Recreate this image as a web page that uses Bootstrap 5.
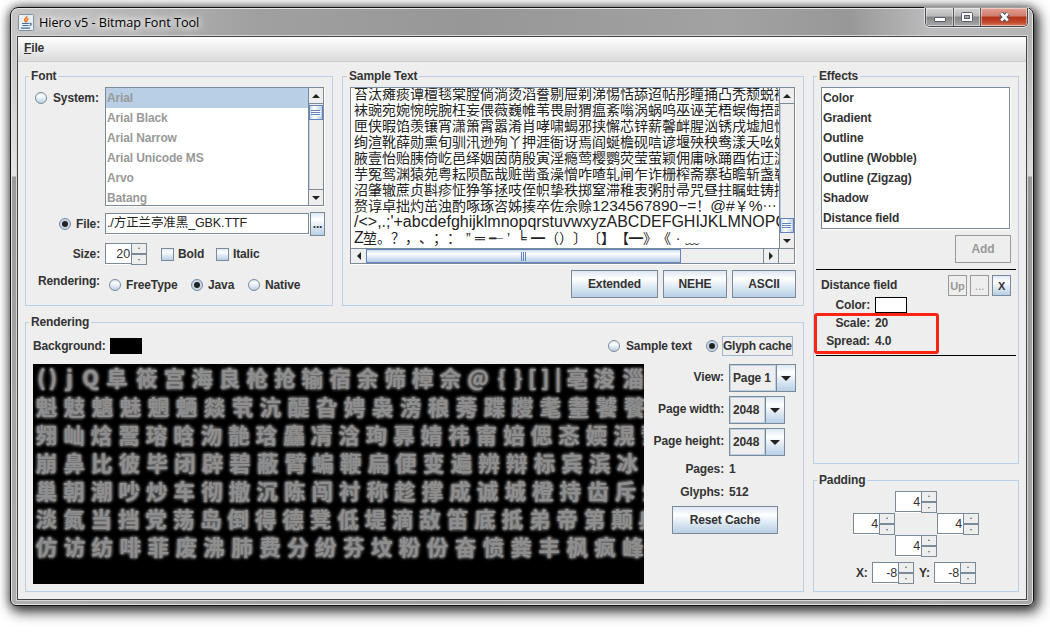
<!DOCTYPE html>
<html lang="en">
<head>
<meta charset="utf-8">
<title>Hiero v5 - Bitmap Font Tool</title>
<link href="https://cdn.jsdelivr.net/npm/bootstrap@5.3.0/dist/css/bootstrap.min.css" rel="stylesheet">
<style>
:root{--edge:#7a8a99;--soft:#b8cfe5;--face:#eee;--ink:#333;--metal:linear-gradient(#dde8f3,#fff 30%,#dde8f3 62%,#b8cfe5)}
body{margin:0;padding:7px 0 0 10px;background:#fff;width:1050px;height:633px;overflow:hidden;font:bold 12px/16px "Liberation Sans","Noto Sans CJK SC",sans-serif;letter-spacing:-.13px;color:var(--ink)}
.win{width:1024px;height:599px;border:1px solid #111;border-radius:8px 8px 6px 6px;padding:0 6px 6px;
 background:linear-gradient(rgba(255,255,255,0) 28px,rgba(255,255,255,.1) 60px,rgba(255,255,255,.55) 168px,rgba(150,150,150,.9) 169px,rgba(160,160,160,.6) 100%),linear-gradient(90deg,#c6c6c6,#b4b4b4 12%,#a0a0a0 24%,#979797 45%,#a2a2a2 70%,#989898 82%,#bcbcbc 90%,#b4b4b4);
 box-shadow:inset 0 0 0 1px #e4e4e4,3px 4px 13px 2px rgba(0,0,0,.75),0 0 9px 1px rgba(0,0,0,.35)}
.titlebar{height:28px;padding:0 0 0 1px}
.titlebar .cap{font:12.7px/20px "Open Sans",sans-serif;letter-spacing:-.03px;color:#000;text-shadow:0 0 6px #fff,0 0 10px #fff,0 0 14px #fff;margin-left:5px}
.capbtns{height:19px;border:1px solid #444a52;border-top:0;border-radius:0 0 5px 5px;overflow:hidden;box-shadow:0 0 0 1px rgba(255,255,255,.6);margin-right:-1px}
.capbtns>span{width:27px;border-right:1px solid #555;background:linear-gradient(#d4d4d4,#b9b9b9 45%,#858585 50%,#a9a9a9);box-shadow:inset 0 0 0 1px rgba(255,255,255,.45)}
.capbtns>span:nth-child(1){width:28px}
.capbtns>span:last-child{width:46px;border:0;background:linear-gradient(#e0a295,#d27b6b 45%,#b3311b 50%,#c24b2c 80%,#dc8068)}
.client{width:1010px;height:564px;border:1px solid #444;background:var(--face);box-shadow:0 0 0 1px #d6d6d6}
.menubar{height:25px;background:linear-gradient(#fff,#dadada);border-bottom:1px solid #ccc;padding:3px 0 0 6px;line-height:16px}
.main{padding:14px 0 0 7px;gap:9px}
.group{border:1px solid var(--soft);position:relative}
.group>.ttl{position:absolute;top:-9px;left:3px;background:var(--face);padding:0 2px;line-height:16px;white-space:nowrap}
.g-font{width:308px;height:230px}.g-sample{width:462px;height:230px}.g-render{width:779px;height:270px;margin-top:16px}
.g-fx{width:206px;height:388px}.g-pad{width:206px;height:112px;margin-top:16px}
.rad{width:12px;height:12px;border-radius:50%;border:1px solid var(--edge);background:var(--metal);flex:none;display:flex;align-items:center;justify-content:center}
.rad.on::after{content:"";width:6px;height:6px;border-radius:50%;background:#222}
.rad.on{background:#c6d8ea}
.chk{width:13px;height:13px;border:1px solid var(--edge);background:var(--metal);flex:none}
.field{border:1px solid var(--edge);background:#fff;box-shadow:inset -1px -1px 0 #fff,1px 1px 0 #fff;font-weight:400}
.filename{font-size:12.5px;letter-spacing:-.1px;color:#222}
.lst{border:1px solid var(--edge);background:#fff;box-shadow:1px 1px 0 #fff;overflow:hidden}
.lst .it{height:20px;line-height:20px;padding-left:1px;white-space:nowrap}
.lst .sel{background:var(--soft)}
.sysitems{color:#999}
.sbar{width:15px;border-left:1px solid var(--edge);background:var(--face);flex:none;box-shadow:inset 1px 0 0 var(--soft)}
.sbtn{background:#eee;display:flex;align-items:center;justify-content:center;flex:none}
.sbtn svg,.thumb svg,.combo svg{display:block}
.thumb{border:1px solid #6382bf;display:flex;align-items:center;justify-content:center;flex:none}
.thumb.v{background:linear-gradient(90deg,#c8d9ea,#fff 35%,#b8cfe5)}
.thumb.h{background:linear-gradient(#c8d9ea,#fff 30%,#dde8f3 60%,#b8cfe5)}
.mbtn{border:1px solid var(--edge);background:var(--metal);display:flex;align-items:center;justify-content:center;color:var(--ink);flex:none}
.mbtn.off{background:var(--face);border-color:#999;color:#999}
.spin{width:42px;height:22px;display:flex;flex:none}
.spin>b{flex:1;height:21px;border:1px solid var(--edge);border-right:0;background:#fff;box-shadow:0 1px 0 #fff;font-weight:400;text-align:right;line-height:20px;font-size:12.5px;padding-right:1px}
.spin>i{width:16px;height:22px;border:1px solid var(--edge);background:linear-gradient(var(--edge),var(--edge)) 0 9px/100% 2px no-repeat var(--face);display:flex;flex-direction:column;justify-content:space-between;align-items:center;padding:3px 0}
.spin>i::before,.spin>i::after{content:"";border:1.5px solid transparent}
.spin>i::before{border-bottom:2px solid #5f6f7e;border-top:0}
.spin>i::after{border-top:2px solid #5f6f7e;border-bottom:0}
.sampletext{width:428px;height:160px;overflow:hidden;white-space:nowrap;font:14px/16px "Liberation Sans","Noto Sans CJK SC",sans-serif;letter-spacing:0;color:#222}
.sampletext>div{height:16px;margin-left:3px}
.sampletext>div:first-child{margin-top:-2px}
.lat{font-size:16px}
.marks i{display:inline-block;width:14px;font-style:normal;height:16px;vertical-align:top;text-align:left}
.cache{width:611px;height:220px;background:#000;overflow:hidden;font:bold 21px/28px "Noto Sans CJK SC",sans-serif;color:#8e8e8e;white-space:nowrap;text-shadow:0 0 1px #777,0 0 2px #777,0 0 3px #6c6c6c,0 0 3px #666,0 0 4px #555,0 0 4px #555;padding:0 0 0 3px}
.cache>div{height:28px;display:flex}
.cache>div:first-child{margin-top:-1px;height:29px}
.cache i{font-style:normal;display:block;flex:none;text-align:center;width:var(--p,27.6px);letter-spacing:0}
.combo{border:1px solid var(--edge);height:28px;display:flex}
.combo>span{flex:1;border:1px solid var(--soft);padding-left:2px;line-height:24px}
.combo>em{width:19px;border-left:1px solid var(--edge);background:var(--metal);display:flex;align-items:center;justify-content:center}
.rlab{width:72px;text-align:right;flex:none}
.swatch{width:32px;height:16px;background:#000}
.hr1{height:1px;background:#000;margin:0 2px}
.redbox{position:absolute;left:0;top:236px;width:125px;height:41px;border:3px solid #fb2314;border-radius:3px}
.gridpad{display:grid;grid-template-columns:repeat(3,42px);grid-template-rows:repeat(3,22px);margin:10px 0 0 39px}
</style>
</head>
<body>
<svg width="0" height="0" class="position-absolute">
<symbol id="up" viewBox="0 0 8 4"><path d="M0 4L4 0l4 4z" fill="#222"/></symbol>
<symbol id="dn" viewBox="0 0 8 4"><path d="M0 0h8L4 4z" fill="#222"/></symbol>
<symbol id="lf" viewBox="0 0 4 8"><path d="M4 0v8L0 4z" fill="#222"/></symbol>
<symbol id="rt" viewBox="0 0 4 8"><path d="M0 0v8l4-4z" fill="#222"/></symbol>
<symbol id="grip" viewBox="0 0 10 6"><path d="M0 .5h9M0 2.5h9M0 4.5h9" stroke="#6382bf"/><path d="M1 1.5h9M1 3.5h9M1 5.5h9" stroke="#fff"/></symbol>
</svg>
<div class="win">
 <div class="titlebar d-flex justify-content-between align-items-start">
  <div class="d-flex align-items-center" style="padding-top:4px">
   <svg width="16" height="17" viewBox="0 0 16 17"><rect x=".5" y=".5" width="15" height="16" rx="1" fill="#e9eff3" stroke="#7d909f"/><path d="M8.800 2c1 1.700-3.500 2.800-2 4.700.5.700 1 1 .8 1.800M10.500 4.500C8 5.500 9.300 6.600 8.800 8" stroke="#ea6b12" stroke-width="1.500" fill="none"/><path d="M4 9.500h7M4.500 11.500h6M3 14.200h9M11.500 9.500c2.300-.5 2.300 1.800 0 2.200" stroke="#3f6f94" stroke-width="1.200" fill="none"/></svg>
   <span class="cap">Hiero v5 - Bitmap Font Tool</span>
  </div>
  <div class="capbtns d-flex">
   <span><svg width="27" height="18"><rect x="8.500" y="9.500" width="11" height="4" rx=".5" fill="#fff" stroke="#555a70"/></svg></span>
   <span><svg width="26" height="18"><rect x="7.500" y="4.500" width="11" height="9" rx="1" fill="#fff" stroke="#555a70"/><rect x="10.500" y="7.500" width="5" height="3" fill="#aaa" stroke="#555a70"/></svg></span>
   <span><svg width="46" height="18"><path d="M20 5.500l7 7M27 5.500l-7 7" stroke="#4b4f68" stroke-width="4.600"/><path d="M20.200 5.500l6.600 7M26.800 5.500l-6.600 7" stroke="#fff" stroke-width="2.600"/></svg></span>
  </div>
 </div>
 <div class="client">
  <div class="menubar"><u>F</u>ile</div>
  <div class="main d-flex">
   <div>
    <div class="d-flex" style="gap:9px">
     <section class="group g-font"><span class="ttl">Font</span>
      <div class="d-flex" style="margin-top:10px;height:119px">
       <div class="d-flex" style="width:79px;padding:5px 0 0 9px;height:22px"><span class="rad"></span><span style="margin:-2px 0 0 6px">System:</span></div>
       <div class="lst sysitems d-flex" style="width:219px">
        <div class="flex-grow-1"><div class="it sel">Arial</div><div class="it">Arial Black</div><div class="it">Arial Narrow</div><div class="it">Arial Unicode MS</div><div class="it">Arvo</div><div class="it">Batang</div></div>
        <div class="sbar d-flex flex-column">
         <div class="sbtn" style="height:16px;border-bottom:1px solid var(--edge)"><svg width="8" height="4"><use href="#up"/></svg></div>
         <div class="thumb v" style="height:15px;margin-top:1px"><svg width="10" height="6"><use href="#grip"/></svg></div>
         <div class="sbtn mt-auto" style="height:16px;border-top:1px solid var(--edge)"><svg width="8" height="4"><use href="#dn"/></svg></div>
        </div>
       </div>
      </div>
      <div class="d-flex align-items-center" style="margin-top:6px;height:24px;padding-left:33px">
       <span class="rad on"></span><span style="margin-left:5px;width:29px">File:</span>
       <div class="field filename text-nowrap" style="width:204px;height:21px;line-height:19px;padding-left:1px;margin-top:-1px">./方正兰亭准黑_GBK.TTF</div>
       <span class="mbtn" style="width:15px;height:24px;margin-left:1px">...</span>
      </div>
      <div class="d-flex align-items-center" style="margin-top:7px;height:22px">
       <span class="text-end" style="width:74px">Size:</span>
       <span class="spin" style="margin-left:5px"><b>20</b><i></i></span>
       <span class="chk" style="margin-left:14px"></span><span style="margin-left:4px;width:38px">Bold</span>
       <span class="chk"></span><span style="margin-left:4px">Italic</span>
      </div>
      <div class="d-flex" style="margin-top:8px;height:24px">
       <span class="text-end" style="width:74px">Rendering:</span>
       <span class="rad" style="margin:6px 5px 0 9px"></span><span style="margin-top:4px;width:65px">FreeType</span>
       <span class="rad on" style="margin:6px 5px 0 0"></span><span style="margin-top:4px;width:40px">Java</span>
       <span class="rad" style="margin:6px 5px 0 0"></span><span style="margin-top:4px">Native</span>
      </div>
     </section>
     <section class="group g-sample"><span class="ttl" style="left:4px">Sample Text</span>
      <div class="field" style="margin:10px 0 0 7px;width:445px;height:177px">
       <div class="d-flex" style="height:160px">
        <div class="sampletext">
         <div>苔汰瘫痰谭檀毯棠膛倘淌烫滔誊剔屉剃涕惕恬舔迢帖彤瞳捅凸秃颓蜕褪</div>
         <div>袜豌宛婉惋皖腕枉妄偎薇巍帷苇畏尉猬瘟紊嗡涡蜗呜巫诬芜梧蜈侮捂鹉</div>
         <div>匣侠暇馅羡镶宵潇箫霄嚣淆肖哮啸蝎邪挟懈芯锌薪馨衅腥汹锈戌墟旭恤</div>
         <div>绚渲靴薛勋熏旬驯汛逊殉丫押涯衙讶焉阎蜒檐砚唁谚堰殃秧鸯漾夭吆妖</div>
         <div>腋壹怡贻胰倚屹邑绎姻茵荫殷寅淫瘾莺樱鹦荧莹萤颖佣庸咏踊酉佑迂淤</div>
         <div>芋冤鸳渊猿苑粤耘陨酝哉赃凿蚤澡憎咋喳轧闸乍诈栅榨斋寨毡瞻斩盏崭</div>
         <div>沼肇辙蔗贞斟疹怔狰筝拯吱侄帜挚秩掷窒滞稚衷粥肘帚咒昼拄瞩蛀铸拽</div>
         <div>赘谆卓拙灼茁浊酌啄琢咨姊揍卒佐佘赊<span class="lat" style="font-size:15.500px">1234567890−=</span>！<span class="lat" style="font-size:15.500px">@#</span>￥<span class="lat" style="font-size:15.500px">%</span>⋯</div>
         <div class="lat">/&lt;&gt;,.;'+abcdefghijklmnopqrstuvwxyzABCDEFGHIJKLMNOPQ</div>
         <div class="marks"><i class="lat" style="width:9px">Z</i><i>堃</i><i>。</i><i>？</i><i>，</i><i>、</i><i>；</i><i>：</i><i style="padding-left:5px">”</i><i>═</i><i>╾</i><i style="padding-left:4px">’</i><i>╘</i><i>━</i><i>（</i><i>）</i><i>〕</i><i>〔</i><i>】</i><i>【</i><i>━</i><i>》</i><i>《</i><i style="text-align:center">·</i><i>﹏</i></div>
        </div>
        <div class="sbar d-flex flex-column">
         <div class="sbtn" style="height:16px;border-bottom:1px solid var(--edge)"><svg width="8" height="4"><use href="#up"/></svg></div>
         <div class="thumb v" style="height:15px;margin-top:114px"><svg width="10" height="6"><use href="#grip"/></svg></div>
         <div class="sbtn flex-grow-1"><svg width="8" height="4"><use href="#dn"/></svg></div>
        </div>
       </div>
       <div class="d-flex" style="height:15px;border-top:1px solid var(--edge);width:443px">
        <div class="sbtn" style="width:15px"><svg width="4" height="8"><use href="#lf"/></svg></div>
        <div class="thumb h" style="width:315px"><svg width="6" height="9"><path d="M.5 0v9M2.500 0v9M4.500 0v9" stroke="#6382bf"/></svg></div>
        <div class="flex-grow-1" style="background:#eee"></div>
        <div class="sbtn" style="width:16px;border:solid var(--edge);border-width:0 1px"><svg width="4" height="8"><use href="#rt"/></svg></div>
        <div style="width:15px;background:#eee"></div>
       </div>
      </div>
      <div class="d-flex" style="margin:6px 0 0 228px;gap:5px">
       <span class="mbtn" style="width:87px;height:28px">Extended</span><span class="mbtn" style="width:64px;height:28px">NEHE</span><span class="mbtn" style="width:64px;height:28px">ASCII</span>
      </div>
     </section>
    </div>
    <section class="group g-render"><span class="ttl">Rendering</span>
     <div class="d-flex align-items-center" style="margin:13px 0 0 7px;height:20px">
      <span style="width:77px">Background:</span><span class="swatch"></span>
      <span class="rad" style="margin-left:466px"></span><span style="margin-left:6px;width:80px">Sample text</span>
      <span class="rad on"></span><span class="text-nowrap" style="margin-left:4px;border:1px solid #a3b8cc;width:71px;height:20px;line-height:18px;letter-spacing:-.25px">Glyph cache</span>
     </div>
     <div class="d-flex" style="margin:8px 0 0 7px">
      <div class="cache">
       <div style="--p:27.600px"><i style="width:11px">(</i><i style="width:12px">)</i><i style="width:21px">j</i><i style="width:21px">Q</i><i style="width:32px">阜</i><i>筱</i><i>宫</i><i>海</i><i>良</i><i>枪</i><i>抢</i><i>输</i><i>宿</i><i>余</i><i>筛</i><i>樟</i><i>佘</i><i style="width:28px">@</i><i style="width:19px">{</i><i style="width:14px">}</i><i style="width:14px">[</i><i style="width:12px">]</i><i style="width:14px">|</i><i style="width:24px">亳</i><i style="width:30px">浚</i><i>淄</i></div>
       <div style="letter-spacing:7px">魁鬾魑魅魍魉燚茕沆醍旮娉袅滂稂莠蹀躞耄耋饕餮</div>
       <div style="letter-spacing:6.500px">翙屾焓翯瑢晗沕靘琀麤凊浛珣奡婧祎甯婄偲忞媆滉彗</div>
       <div style="letter-spacing:6.660px">崩鼻比彼毕闭辟碧蔽臂蝙鞭扁便变遍辨辩标宾滨冰</div>
       <div style="letter-spacing:6.570px">巢朝潮吵炒车彻撤沉陈闯衬称趁撑成诚城橙持齿斥炽</div>
       <div style="letter-spacing:6.400px">淡氮当挡党荡岛倒得德凳低堤滴敌笛底抵弟帝第颠典</div>
       <div style="letter-spacing:6.930px">仿访纺啡菲废沸肺费分纷芬坟粉份奋愤粪丰枫疯峰</div>
      </div>
      <div style="margin-left:8px">
       <div class="d-flex" style="margin-bottom:4px"><span class="rlab" style="padding-top:5px">View:</span><span class="combo" style="width:67px;margin-left:5px"><span>Page 1</span><em><svg width="10" height="5" viewBox="0 0 8 4"><use href="#dn"/></svg></em></span></div>
       <div class="d-flex" style="margin-bottom:4px"><span class="rlab" style="padding-top:5px">Page width:</span><span class="combo" style="width:56px;margin-left:5px"><span>2048</span><em><svg width="10" height="5" viewBox="0 0 8 4"><use href="#dn"/></svg></em></span></div>
       <div class="d-flex" style="margin-bottom:4px"><span class="rlab text-nowrap" style="padding-top:5px">Page height:</span><span class="combo" style="width:56px;margin-left:5px"><span>2048</span><em><svg width="10" height="5" viewBox="0 0 8 4"><use href="#dn"/></svg></em></span></div>
       <div class="d-flex" style="margin-top:5px;height:23px"><span class="rlab">Pages:</span><span style="margin-left:5px">1</span></div>
       <div class="d-flex" style="height:22px"><span class="rlab">Glyphs:</span><span style="margin-left:5px">512</span></div>
       <span class="mbtn" style="width:106px;height:28px;margin-left:20px">Reset Cache</span>
      </div>
     </div>
    </section>
   </div>
   <div>
    <section class="group g-fx"><span class="ttl">Effects</span>
     <div class="lst" style="margin:10px 0 0 7px;width:189px;height:142px"><div class="it">Color</div><div class="it">Gradient</div><div class="it">Outline</div><div class="it">Outline (Wobble)</div><div class="it">Outline (Zigzag)</div><div class="it">Shadow</div><div class="it">Distance field</div></div>
     <span class="mbtn off ms-auto" style="width:56px;height:28px;margin:6px 7px 0 0">Add</span>
     <div class="hr1" style="margin-top:6px"></div>
     <div class="d-flex" style="margin:5px 7px 0 7px;gap:3px"><span class="me-auto" style="padding-top:2px">Distance field</span>
      <span class="mbtn off" style="width:19px;height:21px;font-size:11px">Up</span><span class="mbtn off" style="width:19px;height:21px;font-weight:400">...</span><span class="mbtn" style="width:19px;height:21px;font-size:11px">X</span></div>
     <div class="d-flex" style="height:18px;margin-top:1px"><span class="text-end" style="width:56px">Color:</span><span class="swatch bg-white" style="margin-left:5px;border:1px solid #000"></span></div>
     <div class="d-flex" style="height:18px"><span class="text-end" style="width:56px">Scale:</span><span style="margin-left:5px">20</span></div>
     <div class="d-flex" style="height:18px"><span class="text-end" style="width:56px">Spread:</span><span style="margin-left:5px">4.0</span></div>
     <div class="hr1" style="margin-top:4px"></div>
     <div class="redbox"></div>
    </section>
    <section class="group g-pad"><span class="ttl">Padding</span>
     <div class="gridpad"><span></span><span class="spin"><b>4</b><i></i></span><span></span><span class="spin"><b>4</b><i></i></span><span></span><span class="spin"><b>4</b><i></i></span><span></span><span class="spin"><b>4</b><i></i></span></div>
     <div class="d-flex align-items-center" style="margin:5px 0 0 42px"><span style="width:16px">X:</span><span class="spin"><b>-8</b><i></i></span><span style="width:15px;margin-left:5px">Y:</span><span class="spin"><b>-8</b><i></i></span></div>
    </section>
   </div>
  </div>
 </div>
</div>
<script src="https://cdn.jsdelivr.net/npm/bootstrap@5.3.0/dist/js/bootstrap.bundle.min.js"></script>
</body>
</html>
